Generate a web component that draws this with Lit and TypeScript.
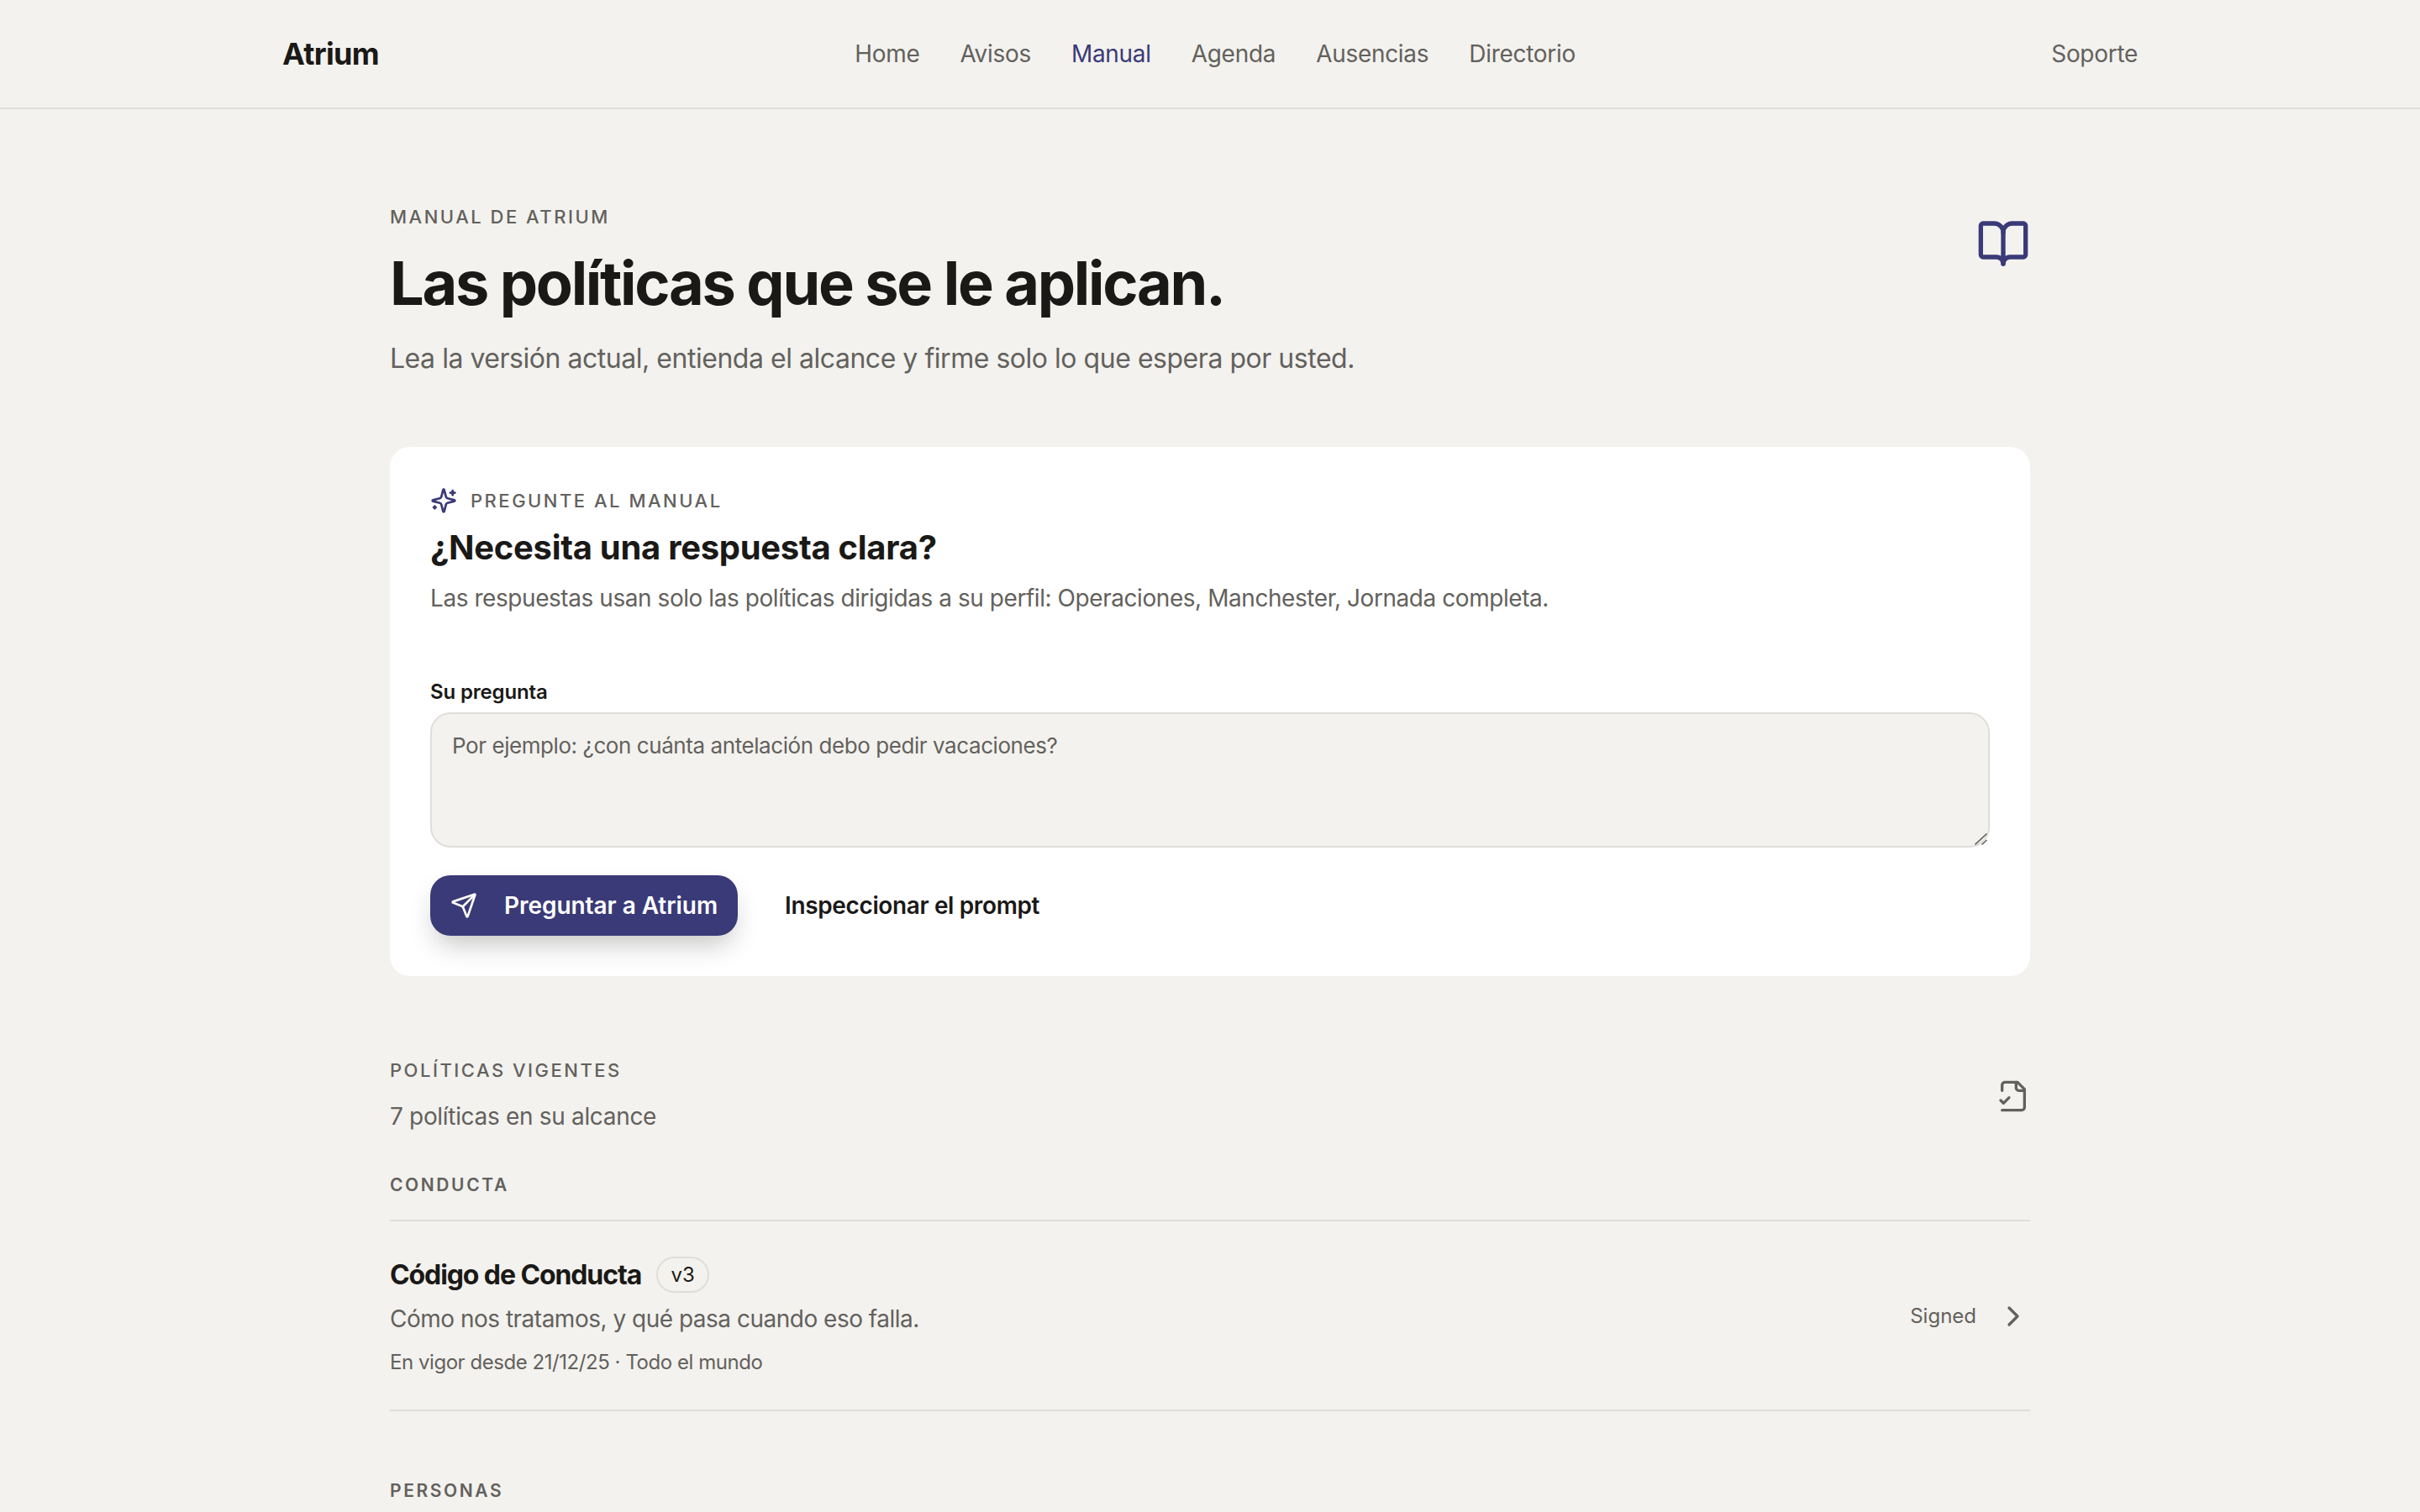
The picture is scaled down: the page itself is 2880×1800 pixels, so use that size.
import { LitElement, html, css, svg } from 'lit';
import { customElement } from 'lit/decorators.js';

const NAV = ['Home', 'Avisos', 'Manual', 'Agenda', 'Ausencias', 'Directorio'];

const icon = (cls: string, body: unknown) => html`
  <svg class=${cls} viewBox="0 0 24 24" fill="none" stroke="currentColor" stroke-width="2" stroke-linecap="round" stroke-linejoin="round">${body}</svg>
`;

const bookIcon = svg`
  <path d="M12 7v14" />
  <path d="M3 18a1 1 0 0 1-1-1V4a1 1 0 0 1 1-1h5a4 4 0 0 1 4 4 4 4 0 0 1 4-4h5a1 1 0 0 1 1 1v13a1 1 0 0 1-1 1h-6a3 3 0 0 0-3 3 3 3 0 0 0-3-3z" />
`;
const sparklesIcon = svg`
  <path d="M9.937 15.5A2 2 0 0 0 8.5 14.063l-6.135-1.582a.5.5 0 0 1 0-.962L8.5 9.936A2 2 0 0 0 9.937 8.5l1.582-6.135a.5.5 0 0 1 .963 0L14.063 8.5A2 2 0 0 0 15.5 9.937l6.135 1.581a.5.5 0 0 1 0 .964L15.5 14.063a2 2 0 0 0-1.437 1.437l-1.582 6.135a.5.5 0 0 1-.963 0z" />
  <path d="M20 3v4" /><path d="M22 5h-4" /><path d="M4 17v2" /><path d="M5 18H3" />
`;
const sendIcon = svg`
  <path d="M14.536 21.686a.5.5 0 0 0 .937-.024l6.5-19a.496.496 0 0 0-.635-.635l-19 6.5a.5.5 0 0 0-.024.937l7.93 3.18a2 2 0 0 1 1.112 1.11z" />
  <path d="m21.854 2.147-10.94 10.939" />
`;
const fileCheckIcon = svg`
  <path d="M4 22h14a2 2 0 0 0 2-2V7l-5-5H6a2 2 0 0 0-2 2v4" />
  <path d="M14 2v4a2 2 0 0 0 2 2h4" />
  <path d="m3 15 2 2 4-4" />
`;
const chevronIcon = svg`<path d="m9 18 6-6-6-6" />`;

@customElement('app-root')
export class AppRoot extends LitElement {
  static styles = css`
    :host {
      display: block;
      min-height: 1800px;
      background: #f3f2ee;
      color: #1a1917;
      font-family: Inter, 'Liberation Sans', sans-serif;
    }
    * {
      box-sizing: border-box;
    }
    .topbar {
      height: 130px;
      padding: 0 336px;
      display: flex;
      align-items: center;
      justify-content: space-between;
      border-bottom: 2px solid #dfdedb;
    }
    .logo {
      font-size: 36px;
      font-weight: 700;
      letter-spacing: -0.7px;
    }
    .nav {
      display: flex;
      gap: 48px;
    }
    .nav a,
    .support {
      font-size: 28px;
      letter-spacing: -0.3px;
      color: #63615d;
    }
    .nav a.active {
      color: #3a3a78;
    }
    main {
      width: 1952px;
      margin: 0 auto;
      padding-top: 112px;
    }
    .hero {
      display: flex;
      justify-content: space-between;
      align-items: flex-start;
    }
    .eyebrow {
      font-size: 22px;
      line-height: 32px;
      font-weight: 500;
      letter-spacing: 2.5px;
      color: #63615d;
      text-transform: uppercase;
    }
    h1 {
      margin: 23px 0 0;
      font-size: 72px;
      line-height: 80px;
      font-weight: 750;
      letter-spacing: -2.3px;
    }
    .lead {
      margin: 26px 0 0;
      font-size: 32px;
      line-height: 48px;
      letter-spacing: -0.47px;
      color: #63615d;
    }
    .book {
      width: 64px;
      height: 64px;
      margin-top: 16px;
      color: #3a3a78;
    }
    .card {
      margin-top: 81px;
      padding: 48px;
      background: #fff;
      border-radius: 24px;
    }
    .card-eyebrow {
      display: flex;
      align-items: center;
      gap: 16px;
    }
    .spark {
      width: 32px;
      height: 32px;
      color: #3a3a78;
    }
    h2 {
      margin: 18px 0 0;
      font-size: 40px;
      line-height: 44px;
      font-weight: 700;
      letter-spacing: -0.3px;
    }
    .card-desc {
      margin: 18px 0 0;
      font-size: 28px;
      line-height: 40px;
      letter-spacing: -0.44px;
      color: #63615d;
    }
    label {
      display: block;
      margin-top: 76px;
      font-size: 24px;
      line-height: 32px;
      font-weight: 600;
      letter-spacing: -0.15px;
    }
    .field {
      position: relative;
      margin-top: 8px;
    }
    textarea {
      display: block;
      width: 100%;
      height: 161px;
      padding: 22px 24px;
      font: 26px/32px Inter, 'Liberation Sans', sans-serif;
      letter-spacing: -0.43px;
      background: #f3f2ee;
      border: 2px solid #dfdedb;
      border-radius: 24px;
      outline: none;
      resize: none;
    }
    textarea::placeholder {
      color: #63615d;
      opacity: 1;
    }
    .grip {
      position: absolute;
      right: 2px;
      bottom: 1px;
      width: 16px;
      height: 16px;
      color: #63615d;
    }
    .actions {
      display: flex;
      align-items: center;
      gap: 56px;
      margin-top: 33px;
    }
    .primary {
      display: flex;
      align-items: center;
      gap: 32px;
      height: 72px;
      padding: 0 24px;
      border: 0;
      border-radius: 24px;
      background: #3a3a78;
      color: #fff;
      font: 600 28px Inter, 'Liberation Sans', sans-serif;
      letter-spacing: -0.05px;
      box-shadow: 0 16px 32px -8px rgba(26, 25, 23, 0.28);
    }
    .primary svg {
      width: 32px;
      height: 32px;
    }
    .ghost {
      border: 0;
      padding: 0;
      background: none;
      color: #1a1917;
      font: 600 28px Inter, 'Liberation Sans', sans-serif;
      letter-spacing: -0.37px;
    }
    .section-head {
      display: flex;
      justify-content: space-between;
      align-items: center;
      margin-top: 96px;
    }
    .count {
      margin-top: 17px;
      font-size: 28px;
      line-height: 44px;
      letter-spacing: -0.32px;
      color: #63615d;
    }
    .file {
      width: 40px;
      height: 40px;
      color: #63615d;
    }
    .group {
      font-size: 21px;
      line-height: 32px;
      font-weight: 600;
      letter-spacing: 2.6px;
      color: #63615d;
      text-transform: uppercase;
    }
    .group.first {
      margin-top: 44px;
      padding-bottom: 25px;
    }
    .group.next {
      margin-top: 79px;
    }
    .row {
      display: flex;
      justify-content: space-between;
      align-items: center;
      padding: 41px 0 38px;
      border-top: 2px solid #dfdedb;
      border-bottom: 2px solid #dfdedb;
    }
    .row-title {
      display: flex;
      align-items: center;
      gap: 18px;
      height: 44px;
      font-size: 32px;
      font-weight: 700;
      letter-spacing: -1.1px;
    }
    .pill {
      display: flex;
      align-items: center;
      justify-content: center;
      width: 63px;
      height: 43px;
      border: 2px solid #dfdedb;
      border-radius: 22px;
      font-size: 24px;
      font-weight: 400;
      letter-spacing: 0;
    }
    .row-desc {
      margin-top: 11px;
      font-size: 28px;
      line-height: 40px;
      letter-spacing: -0.5px;
      color: #63615d;
    }
    .row-meta {
      margin-top: 14px;
      font-size: 24px;
      line-height: 36px;
      letter-spacing: -0.45px;
      color: #63615d;
    }
    .row-status {
      display: flex;
      align-items: center;
      gap: 24px;
      padding-bottom: 2px;
      font-size: 24px;
      color: #63615d;
    }
    .chev {
      width: 40px;
      height: 40px;
    }
  `;

  render() {
    return html`
      <header class="topbar">
        <div class="logo">Atrium</div>
        <nav class="nav">
          ${NAV.map((n) => html`<a class=${n === 'Manual' ? 'active' : ''}>${n}</a>`)}
        </nav>
        <div class="support">Soporte</div>
      </header>

      <main>
        <section class="hero">
          <div>
            <div class="eyebrow">Manual de Atrium</div>
            <h1>Las políticas que se le aplican.</h1>
            <p class="lead">Lea la versión actual, entienda el alcance y firme solo lo que espera por usted.</p>
          </div>
          ${icon('book', bookIcon)}
        </section>

        <section class="card">
          <div class="card-eyebrow">
            ${icon('spark', sparklesIcon)}
            <span class="eyebrow">Pregunte al manual</span>
          </div>
          <h2>¿Necesita una respuesta clara?</h2>
          <p class="card-desc">Las respuestas usan solo las políticas dirigidas a su perfil: Operaciones, Manchester, Jornada completa.</p>
          <label for="q">Su pregunta</label>
          <div class="field">
            <textarea id="q" placeholder="Por ejemplo: ¿con cuánta antelación debo pedir vacaciones?"></textarea>
            <svg class="grip" viewBox="0 0 16 16" fill="none" stroke="currentColor" stroke-width="1.6">
              <path d="M0.5 13.5 14.5 0.5" />
              <path d="M8.5 13.5 14.5 8" />
            </svg>
          </div>
          <div class="actions">
            <button class="primary">${icon('', sendIcon)}<span>Preguntar a Atrium</span></button>
            <button class="ghost">Inspeccionar el prompt</button>
          </div>
        </section>

        <section class="section-head">
          <div>
            <div class="eyebrow">Políticas vigentes</div>
            <div class="count">7 políticas en su alcance</div>
          </div>
          ${icon('file', fileCheckIcon)}
        </section>

        <div class="group first">Conducta</div>
        <article class="row">
          <div>
            <div class="row-title">Código de Conducta <span class="pill">v3</span></div>
            <div class="row-desc">Cómo nos tratamos, y qué pasa cuando eso falla.</div>
            <div class="row-meta">En vigor desde 21/12/25 · Todo el mundo</div>
          </div>
          <div class="row-status">Signed ${icon('chev', chevronIcon)}</div>
        </article>

        <div class="group next">Personas</div>
      </main>
    `;
  }
}
